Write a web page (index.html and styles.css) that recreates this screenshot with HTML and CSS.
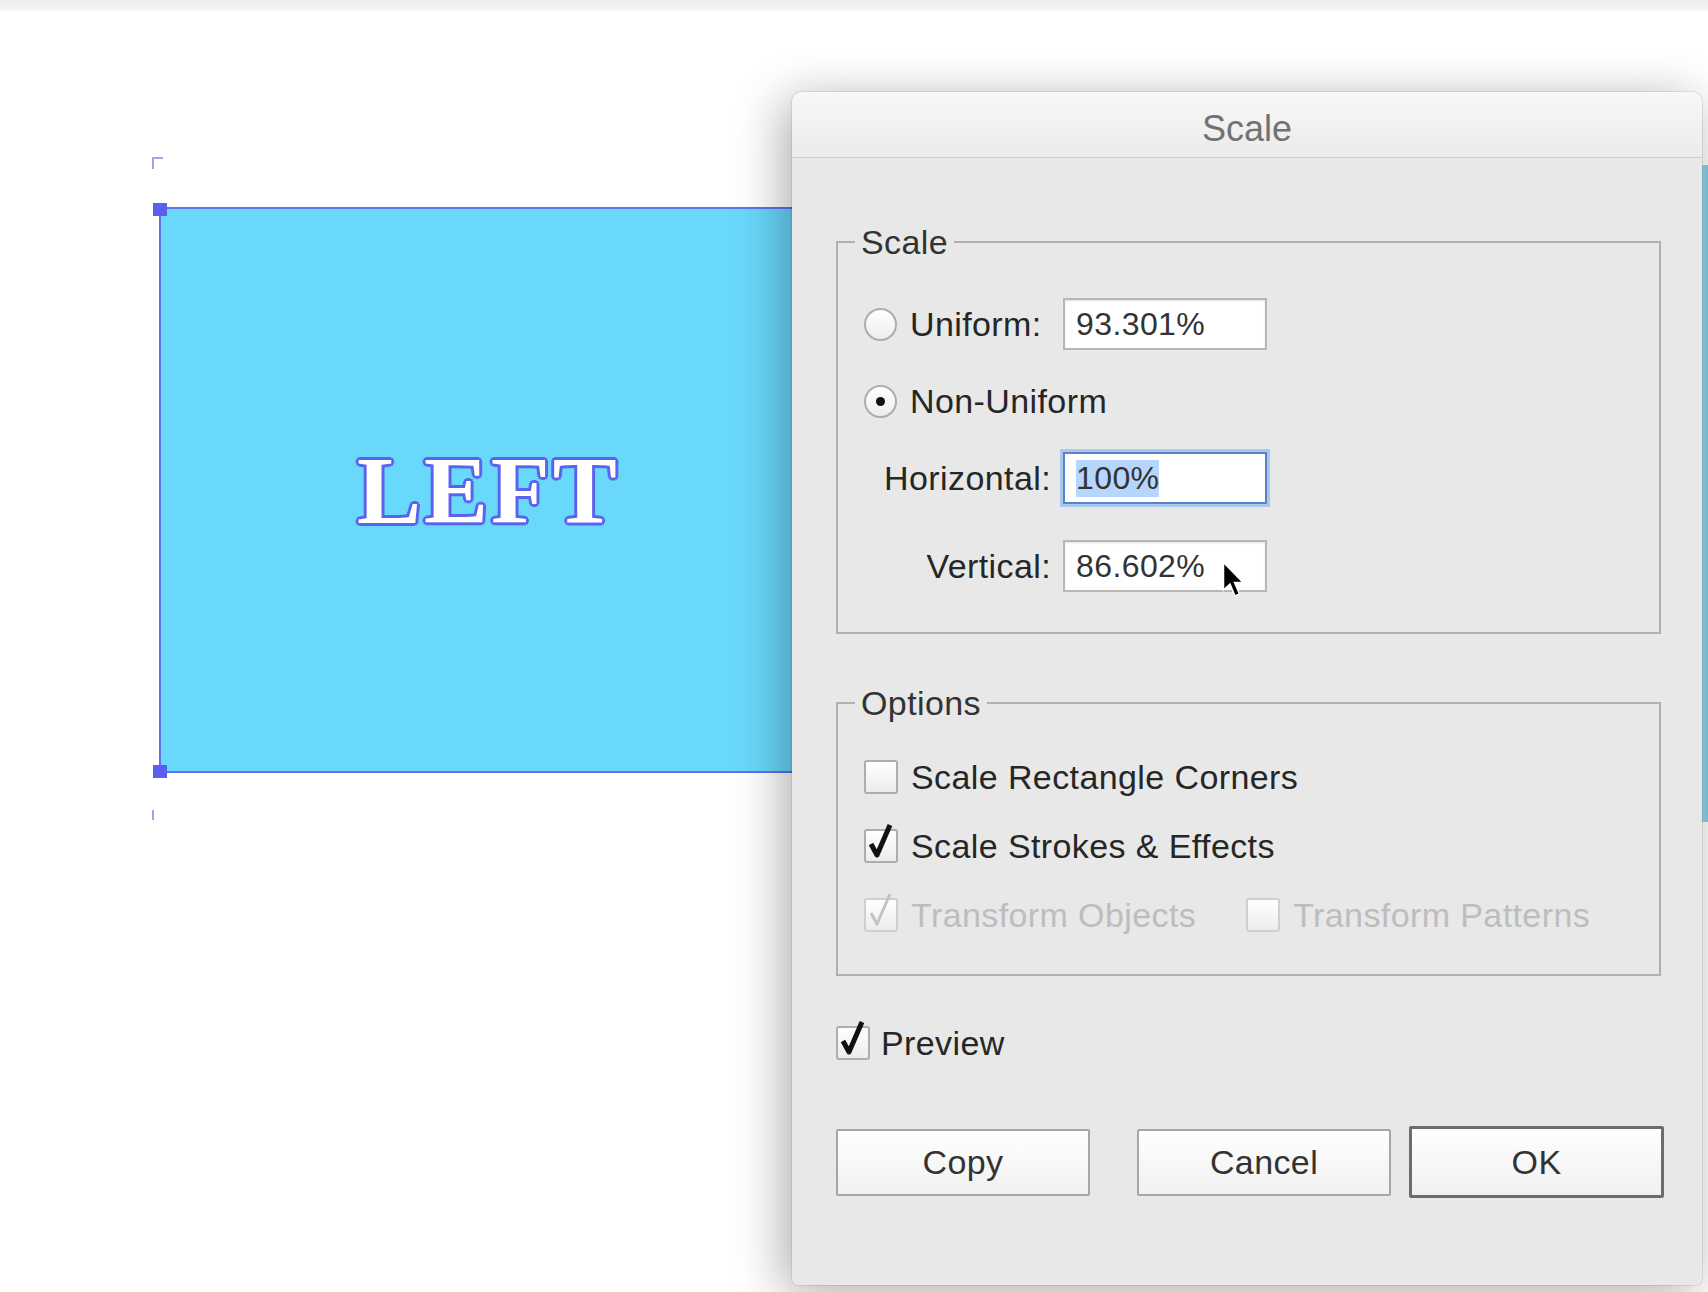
FILE: index.html
```html
<!DOCTYPE html>
<html lang="en">
<head>
    <meta charset="UTF-8">
    <title>Scale</title>
    <link rel="stylesheet" href="styles.css">
</head>
<body>

    <!-- Artboard behind the dialog -->
    <div class="topbar"></div>
    <span class="mark mark-top"></span>
    <div class="shape">
        <span class="handle handle-tl"></span>
        <span class="handle handle-bl"></span>
        <span class="shape-text">LEFT</span>
    </div>
    <span class="mark mark-bottom"></span>
    <div class="edge-strip"></div>

    <!-- Scale dialog -->
    <div class="dialog">
        <div class="titlebar">Scale</div>

        <div class="dialog-body">
            <fieldset class="group group-scale">
                <legend>Scale</legend>
                <div class="rows">
                    <div class="row">
                        <div class="lbl"><span class="radio"></span>Uniform:</div>
                        <div class="field">93.301%</div>
                    </div>
                    <div class="row row-short">
                        <div class="lbl wide"><span class="radio on"></span>Non-Uniform</div>
                    </div>
                    <div class="row">
                        <div class="lbl right">Horizontal:</div>
                        <div class="field focus"><span class="sel">100%</span></div>
                    </div>
                    <div class="row row-last">
                        <div class="lbl right">Vertical:</div>
                        <div class="field">86.602%</div>
                    </div>
                </div>
            </fieldset>

            <fieldset class="group group-options">
                <legend>Options</legend>
                <div class="checks">
                    <div class="check-row">
                        <span class="box"></span>Scale Rectangle Corners
                    </div>
                    <div class="check-row">
                        <span class="box"><svg class="tick" viewBox="0 0 34 34"><path d="M7 15 L13 26 L26 -4"/></svg></span>Scale Strokes &amp; Effects
                    </div>
                    <div class="check-row pair">
                        <div class="check-item off">
                            <span class="box"><svg class="tick" viewBox="0 0 34 34"><path d="M7 15 L13 26 L26 -4"/></svg></span>Transform Objects
                        </div>
                        <div class="check-item off">
                            <span class="box"></span>Transform Patterns
                        </div>
                    </div>
                </div>
            </fieldset>

            <div class="check-row preview">
                <span class="box"><svg class="tick" viewBox="0 0 34 34"><path d="M7 15 L13 26 L26 -4"/></svg></span>Preview
            </div>

            <div class="buttons">
                <button class="btn">Copy</button>
                <div class="btn-group">
                    <button class="btn">Cancel</button>
                    <button class="btn btn-default">OK</button>
                </div>
            </div>
        </div>
    </div>

    <!-- Mouse pointer over the Vertical field -->
    <svg class="cursor" viewBox="0 0 24 38" width="24" height="38">
        <path d="M1.5 1.5 L1.5 29 L8 23 L13 35 L17.5 33 L12.5 21.5 L21 21.5 Z"/>
    </svg>

</body>
</html>
```

FILE: styles.css
```css
body {
    margin: 0;
    width: 1708px;
    height: 1292px;
    position: relative;
    overflow: hidden;
    background: #fff;
    font-family: "Liberation Sans", Arial, sans-serif;
    color: #262626;
}

/* Artboard */
.topbar {
    height: 11px;
    background: linear-gradient(#ededed, #f7f7f7);
}

.shape {
    position: absolute;
    left: 159px;
    top: 207px;
    width: 700px;
    height: 566px;
    background: #69d9fb;
    border-top: 2px solid #6470f2;
    border-left: 2px solid #6470f2;
    border-bottom: 2px solid #6470f2;
    box-sizing: border-box;
    display: flex;
    align-items: center;
    padding-left: 196px;
}

.shape-text {
    font-family: "Liberation Serif", serif;
    font-weight: bold;
    font-size: 96px;
    letter-spacing: 3px;
    color: #fff;
    text-shadow:
        3px 0 #5b62ee, -3px 0 #5b62ee, 0 3px #5b62ee, 0 -3px #5b62ee,
        2px 2px #5b62ee, -2px -2px #5b62ee, 2px -2px #5b62ee, -2px 2px #5b62ee;
}

.handle {
    position: absolute;
    left: -8px;
    width: 14px;
    height: 13px;
    background: #5b5ff0;
}
.handle-tl { top: -6px; }
.handle-bl { bottom: -7px; }

.mark {
    position: absolute;
    border-color: #a3a3e4;
    border-style: solid;
}
.mark-top {
    left: 152px;
    top: 157px;
    width: 9px;
    height: 10px;
    border-width: 2px 0 0 2px;
}
.mark-bottom {
    left: 152px;
    top: 810px;
    width: 0;
    height: 10px;
    border-width: 0 0 0 2px;
}

.edge-strip {
    position: absolute;
    left: 1700px;
    top: 165px;
    width: 8px;
    height: 657px;
    background: linear-gradient(90deg, #a6dcee, #7ccbe6);
}

/* Dialog window */
.dialog {
    position: absolute;
    left: 792px;
    top: 92px;
    width: 910px;
    height: 1193px;
    background: #e8e8e8;
    border-radius: 10px 10px 6px 6px;
    box-shadow: -8px 8px 50px rgba(0, 0, 0, 0.33), 0 0 0 1px rgba(0, 0, 0, 0.08);
    display: flex;
    flex-direction: column;
}

.titlebar {
    flex: none;
    height: 66px;
    box-sizing: border-box;
    padding-top: 8px;
    border-bottom: 1px solid #cfcfcf;
    border-radius: 10px 10px 0 0;
    background: linear-gradient(#f8f8f8, #ebebeb);
    display: flex;
    align-items: center;
    justify-content: center;
    font-size: 36px;
    color: #727272;
}

.dialog-body {
    padding: 64px 41px 0 44px;
    display: flex;
    flex-direction: column;
    font-size: 34px;
    letter-spacing: 0.4px;
}

/* Group boxes */
.group {
    margin: 0;
    min-width: 0;
    border: 2px solid #b0b0b0;
    padding: 36px 0 40px 26px;
}

.group legend {
    font-size: 34px;
    line-height: 40px;
    padding: 0 6px;
    margin-left: -9px;
    color: #333;
}

.group-options {
    margin-top: 49px;
    padding-top: 35px;
}

.rows {
    display: flex;
    flex-direction: column;
    gap: 33px;
}

.row {
    display: flex;
    align-items: center;
    height: 52px;
}
.row-short { height: 36px; }
.row-last { margin-top: 3px; }

.lbl {
    width: 187px;
    display: flex;
    align-items: center;
    gap: 13px;
    white-space: nowrap;
}
.lbl.right { justify-content: flex-end; }
.lbl.wide { width: auto; }

.field {
    margin-left: 12px;
    width: 204px;
    height: 52px;
    box-sizing: border-box;
    border: 2px solid #b7b7b7;
    background: #fff;
    box-shadow: inset 0 1px 2px rgba(0, 0, 0, 0.12);
    padding-left: 11px;
    display: flex;
    align-items: center;
    font-size: 32px;
    color: #333;
}

.field.focus {
    border-color: #5b82c6;
    box-shadow: 0 0 0 3px #a9c8ee;
}

.sel { background: #b6d6fc; }

/* Radio buttons */
.radio {
    flex: none;
    width: 33px;
    height: 33px;
    box-sizing: border-box;
    border: 2px solid #adadad;
    border-radius: 50%;
    background: linear-gradient(#ffffff, #ededed);
    display: flex;
    align-items: center;
    justify-content: center;
}
.radio.on::after {
    content: "";
    width: 9px;
    height: 9px;
    border-radius: 50%;
    background: #111;
}

/* Checkboxes */
.checks {
    display: flex;
    flex-direction: column;
    gap: 31px;
}

.check-row,
.check-item {
    display: flex;
    align-items: center;
    height: 38px;
    gap: 13px;
    white-space: nowrap;
}

.check-row.pair { gap: 50px; }

.check-item.off { color: #bdbdbd; }

.box {
    flex: none;
    position: relative;
    width: 34px;
    height: 34px;
    box-sizing: border-box;
    border: 2px solid #adadad;
    border-radius: 3px;
    background: linear-gradient(#ffffff, #ececec);
}

.tick {
    position: absolute;
    left: -2px;
    top: -2px;
    width: 34px;
    height: 34px;
    overflow: visible;
}
.tick path {
    fill: none;
    stroke: #111;
    stroke-width: 5;
    stroke-linejoin: round;
}

.off .box { border-color: #cfcfcf; }
.off .tick path {
    stroke: #c4c4c4;
    stroke-width: 3;
}

.preview {
    margin-top: 48px;
    gap: 11px;
}

/* Buttons */
.buttons {
    margin-top: 64px;
    margin-right: -3px;
    display: flex;
    align-items: center;
    justify-content: space-between;
}

.btn-group {
    display: flex;
    align-items: center;
    gap: 18px;
}

.btn {
    width: 254px;
    height: 67px;
    box-sizing: border-box;
    border: 2px solid #a6a6a6;
    border-radius: 2px;
    background: linear-gradient(#ffffff, #f0f0f0);
    font-family: "Liberation Sans", Arial, sans-serif;
    font-size: 34px;
    letter-spacing: 0.4px;
    color: #333;
    padding: 0;
}

.btn-default {
    height: 72px;
    border: 3px solid #6c6c6c;
    width: 255px;
}

.cursor {
    position: absolute;
    left: 1222px;
    top: 561px;
}
.cursor path {
    fill: #000;
    stroke: #fff;
    stroke-width: 1.5;
}
```
